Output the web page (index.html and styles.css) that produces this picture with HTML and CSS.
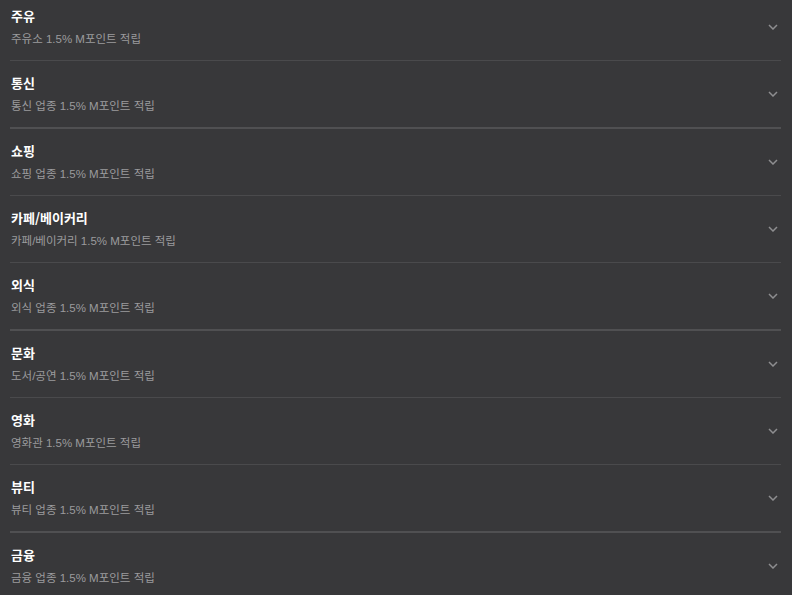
FILE: index.html
```html
<!DOCTYPE html>
<html lang="ko">
<head>
<meta charset="utf-8">
<link rel="stylesheet" href="styles.css">
</head>
<body>
<ul class="list">
  <li class="item"><div class="text"><div class="title">주유</div><div class="desc">주유소 1.5% M포인트 적립</div></div><svg class="chev" width="10" height="6" viewBox="0 0 10 6"><polyline points="1,1 5,5 9,1"/></svg></li>
  <li class="item"><div class="text"><div class="title">통신</div><div class="desc">통신 업종 1.5% M포인트 적립</div></div><svg class="chev" width="10" height="6" viewBox="0 0 10 6"><polyline points="1,1 5,5 9,1"/></svg></li>
  <li class="item"><div class="text"><div class="title">쇼핑</div><div class="desc">쇼핑 업종 1.5% M포인트 적립</div></div><svg class="chev" width="10" height="6" viewBox="0 0 10 6"><polyline points="1,1 5,5 9,1"/></svg></li>
  <li class="item"><div class="text"><div class="title">카페/베이커리</div><div class="desc">카페/베이커리 1.5% M포인트 적립</div></div><svg class="chev" width="10" height="6" viewBox="0 0 10 6"><polyline points="1,1 5,5 9,1"/></svg></li>
  <li class="item"><div class="text"><div class="title">외식</div><div class="desc">외식 업종 1.5% M포인트 적립</div></div><svg class="chev" width="10" height="6" viewBox="0 0 10 6"><polyline points="1,1 5,5 9,1"/></svg></li>
  <li class="item"><div class="text"><div class="title">문화</div><div class="desc">도서/공연 1.5% M포인트 적립</div></div><svg class="chev" width="10" height="6" viewBox="0 0 10 6"><polyline points="1,1 5,5 9,1"/></svg></li>
  <li class="item"><div class="text"><div class="title">영화</div><div class="desc">영화관 1.5% M포인트 적립</div></div><svg class="chev" width="10" height="6" viewBox="0 0 10 6"><polyline points="1,1 5,5 9,1"/></svg></li>
  <li class="item"><div class="text"><div class="title">뷰티</div><div class="desc">뷰티 업종 1.5% M포인트 적립</div></div><svg class="chev" width="10" height="6" viewBox="0 0 10 6"><polyline points="1,1 5,5 9,1"/></svg></li>
  <li class="item"><div class="text"><div class="title">금융</div><div class="desc">금융 업종 1.5% M포인트 적립</div></div><svg class="chev" width="10" height="6" viewBox="0 0 10 6"><polyline points="1,1 5,5 9,1"/></svg></li>
</ul>
</body>
</html>
```
FILE: styles.css
```css
html, body {
  margin: 0;
  padding: 0;
  background: #38383a;
  overflow: hidden;
}
body {
  font-family: "Liberation Sans", "Noto Sans CJK KR", sans-serif;
}
.list {
  list-style: none;
  margin: -6px 11px 0 10px;
  padding: 0;
}
.item {
  display: flex;
  align-items: center;
  justify-content: space-between;
  padding: 13px 3px 13px 1px;
  border-bottom: 1px solid #4a4a4c;
}
.item:nth-child(3n+2) {
  border-bottom: 2px solid #505052;
}
.text {
  display: flex;
  flex-direction: column;
  gap: 6px;
}
.title {
  font-family: "Noto Sans CJK KR", sans-serif;
  font-weight: 700;
  font-size: 13px;
  line-height: 18px;
  color: #ffffff;
}
.desc {
  font-size: 11.5px;
  line-height: 16px;
  color: #9b9b9d;
}
.chev {
  display: block;
  fill: none;
  stroke: #8e8e90;
  stroke-width: 1.5;
}
```
